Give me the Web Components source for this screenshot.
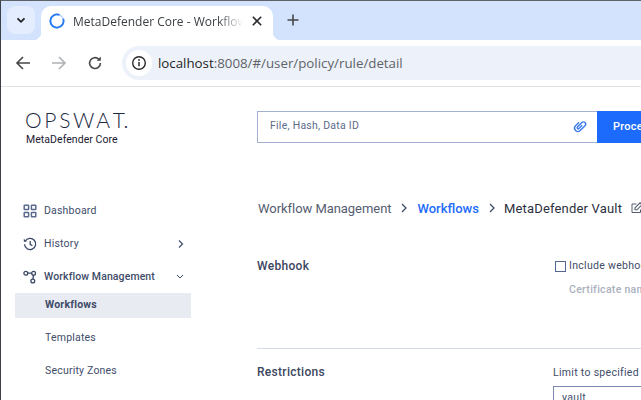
<!DOCTYPE html>
<html>
<head>
<meta charset="utf-8">
<title>MetaDefender Core - Workflow Management</title>
<style>
  html, body { margin: 0; padding: 0; height: 100%; overflow: hidden; background: #ffffff; }
  body { font-family: "Roboto", "Liberation Sans", sans-serif; }
</style>
</head>
<body>
<browser-frame>
  <browser-tabs title-text="MetaDefender Core - Workflow Management"></browser-tabs>
  <browser-toolbar url-host="localhost" url-rest=":8008/#/user/policy/rule/detail"></browser-toolbar>
  <app-shell>
    <side-nav slot="nav"></side-nav>
    <search-bar></search-bar>
    <bread-crumbs></bread-crumbs>
    <settings-section heading="Webhook" pad="51">
      <check-field label="Include webhook data in response"></check-field>
      <div slot="sub">Certificate name</div>
    </settings-section>
    <settings-section heading="Restrictions" pad="0" ruled>
      <limit-field label="Limit to specified user agents" value="vault"></limit-field>
    </settings-section>
  </app-shell>
</browser-frame>

<script>
(function () {
  const define = (name, css, html, setup) => {
    const tpl = document.createElement("template");
    tpl.innerHTML = `<style>${css}</style>${html}`;
    customElements.define(name, class extends HTMLElement {
      constructor() {
        super();
        this.attachShadow({ mode: "open" }).appendChild(tpl.content.cloneNode(true));
      }
      connectedCallback() {
        setup && setup(this, this.shadowRoot);
      }
    });
  };

  define("browser-frame", `
    :host { display: flex; flex-direction: column; width: 641px; height: 400px; overflow: hidden;
      border-top: 1px solid #5f6368; border-left: 1px solid #3c4046; box-sizing: border-box; }
  `, `<slot></slot>`);

  define("browser-tabs", `
    :host { display: flex; align-items: flex-end; height: 39px; flex: none; background: #d3e3fd;
      font-family: "Open Sans", "Noto Sans", sans-serif; }
    .drop { width: 28px; height: 28px; margin: 0 6px 6px 6px; border-radius: 8px; background: #e4edfd;
      display: flex; align-items: center; justify-content: center; flex: none; }
    .tab { position: relative; display: flex; align-items: center; width: 232px; height: 34px; flex: none;
      background: #fff; border-radius: 10px 10px 0 0; box-sizing: border-box; padding: 0 8px 4px 8px; }
    .tab::before, .tab::after { content: ""; position: absolute; bottom: 0; width: 8px; height: 8px;
      background: radial-gradient(circle at 0 0, transparent 8px, #fff 8.5px); }
    .tab::before { left: -8px; }
    .tab::after { right: -8px; background: radial-gradient(circle at 100% 0, transparent 8px, #fff 8.5px); }
    .spin { width: 16px; height: 16px; flex: none; }
    .title { flex: 1; margin-left: 8px; font-size: 12px; color: #3c4043; white-space: nowrap; overflow: hidden;
      -webkit-mask-image: linear-gradient(to right, #000 85%, transparent); }
    .close { width: 16px; height: 16px; flex: none; margin-left: 6px; }
    .plus { width: 16px; height: 16px; margin: 0 0 12px 12px; flex: none; }
  `, `
    <div class="drop"><svg width="12" height="12" viewBox="0 0 12 12"><path d="M2.500 4.300 6 7.800l3.500-3.500" fill="none" stroke="#1f1f1f" stroke-width="1.700"/></svg></div>
    <div class="tab">
      <svg class="spin" viewBox="0 0 16 16"><circle cx="8" cy="8" r="6.600" fill="none" stroke="#c4d9fb" stroke-width="1.700"/><path d="M10.500 1.900A6.600 6.600 0 1 0 14.200 5.800" fill="none" stroke="#2479f2" stroke-width="1.800"/></svg>
      <span class="title"></span>
      <svg class="close" viewBox="0 0 16 16"><path d="M3.800 3.800l8.400 8.400M12.200 3.800l-8.400 8.400" stroke="#2b2d30" stroke-width="1.600"/></svg>
    </div>
    <svg class="plus" viewBox="0 0 16 16"><path d="M8 2.500v11M2.500 8h11" stroke="#444746" stroke-width="1.600"/></svg>
  `, (el, root) => {
    root.querySelector(".title").textContent = el.getAttribute("title-text");
  });

  define("browser-toolbar", `
    :host { display: flex; align-items: center; height: 47px; flex: none; box-sizing: border-box;
      border-bottom: 1px solid #e3e3e3; background: #fff; padding-left: 14px;
      font-family: "Open Sans", "Noto Sans", sans-serif; }
    svg { flex: none; }
    .fwd { margin-left: 20px; }
    .reload { margin-left: 20px; }
    .omni { display: flex; align-items: center; flex: 1; height: 34px; margin-left: 19px; background: #edf2fa;
      border-radius: 17px 0 0 17px; padding-left: 4px; font-size: 13.3px; color: #5f6368; white-space: nowrap; }
    .info { width: 26px; height: 26px; border-radius: 50%; background: #fff; display: flex; align-items: center;
      justify-content: center; margin-right: 6px; flex: none; }
    .host { color: #1f1f1f; }
  `, `
    <svg width="16" height="16" viewBox="0 0 16 16"><path d="M15 8H2M8 2 2 8l6 6" fill="none" stroke="#474747" stroke-width="1.600"/></svg>
    <svg class="fwd" width="16" height="16" viewBox="0 0 16 16"><path d="M1 8h13M8 2l6 6-6 6" fill="none" stroke="#b0b1b3" stroke-width="1.600"/></svg>
    <svg class="reload" width="16" height="16" viewBox="0 0 16 16"><path d="M13.400 8a5.400 5.400 0 1 1-1.600-3.800" fill="none" stroke="#474747" stroke-width="1.600"/><path d="M13.800 1.600v4.200H9.600" fill="#474747"/></svg>
    <div class="omni">
      <span class="info"><svg width="16" height="16" viewBox="0 0 16 16"><circle cx="8" cy="8" r="6.300" fill="none" stroke="#2a2a2a" stroke-width="1.400"/><path d="M8 7v4.200" stroke="#2a2a2a" stroke-width="1.500"/><circle cx="8" cy="5" r=".9" fill="#2a2a2a"/></svg></span>
      <span class="host"></span><span class="rest"></span>
    </div>
  `, (el, root) => {
    root.querySelector(".host").textContent = el.getAttribute("url-host");
    root.querySelector(".rest").textContent = el.getAttribute("url-rest");
  });

  define("app-shell", `
    :host { display: flex; flex: 1; min-height: 0; }
    .nav { width: 256px; flex: none; }
    main { width: 760px; flex: none; }
  `, `<div class="nav"><slot name="nav"></slot></div><main><slot></slot></main>`);

  const navIcons = {
    dash: `<rect x="1.200" y="1.200" width="4.400" height="4.400" rx=".5"/><rect x="8.400" y="1.200" width="4.400" height="4.400" rx=".5"/><rect x="1.200" y="8.400" width="4.400" height="4.400" rx=".5"/><rect x="8.400" y="8.400" width="4.400" height="4.400" rx=".5"/>`,
    hist: `<path d="M2.200 4.200A5.600 5.600 0 1 1 1.500 7.300"/><path d="M.8 1.800v3h3z" fill="#3b4866" stroke="none"/><path d="M7.200 4v3.300l2.200 1.500"/>`,
    flow: `<circle cx="2.800" cy="3.200" r="1.900"/><circle cx="10.600" cy="3.200" r="1.900"/><circle cx="9.800" cy="11" r="1.900"/><path d="M4.700 3.200h4M10.400 5.100l-.4 4"/>`
  };

  define("side-nav", `
    :host { display: block; padding: 23px 0 0 14px; width: 176px; color: #414c69; font-size: 10.5px; letter-spacing: .2px; }
    .logo { padding-left: 10px; height: 84px; }
    .mark { font-family: "Lato", "Liberation Sans", sans-serif; font-size: 21px; font-weight: 300; letter-spacing: 2.7px;
      color: #1d2a44; line-height: 20px; height: 20px; white-space: nowrap; }
    .mark span { letter-spacing: 0; }
    .product { font-size: 10.5px; line-height: 13px; margin-top: 3px; color: #1c2033; padding-left: 1px; letter-spacing: .05px; }
    .item { display: flex; align-items: center; height: 33px; padding-left: 8px; gap: 7px; }
    .item svg.ic { flex: none; fill: none; stroke: #3b4866; stroke-width: 1.300; }
    .item svg.soft { stroke: #5b6b8c; stroke-width: 1.500; }
    .item span { flex: 1; }
    .item svg.caret { margin-right: 6px; flex: none; }
    .strong { font-weight: 500; letter-spacing: .1px; }
    .sub { display: block; height: 33px; line-height: 33px; padding-left: 30px; }
    .sub.on { background: #e8ebf2; height: 25px; line-height: 23px; font-weight: 700; margin-bottom: 3px; }
  `, `
    <div class="logo"><div class="mark">OPSWA<span>T.</span></div><div class="product">MetaDefender Core</div></div>
    <div class="item"><svg class="ic soft" width="14" height="14" viewBox="0 0 14 14">${navIcons.dash}</svg><span>Dashboard</span></div>
    <div class="item"><svg class="ic" width="14" height="14" viewBox="0 0 14 14">${navIcons.hist}</svg><span>History</span><svg class="caret" width="8" height="10" viewBox="0 0 8 10"><path d="M2 1.500l3.500 3.500-3.500 3.500" fill="none" stroke="#414c69" stroke-width="1.200"/></svg></div>
    <div class="item strong"><svg class="ic" width="14" height="14" viewBox="0 0 14 14">${navIcons.flow}</svg><span>Workflow Management</span><svg class="caret" width="10" height="8" viewBox="0 0 10 8"><path d="M2 2l3 3 3-3" fill="none" stroke="#414c69" stroke-width="1"/></svg></div>
    <a class="sub on">Workflows</a>
    <a class="sub">Templates</a>
    <a class="sub">Security Zones</a>
  `);

  define("search-bar", `
    :host { display: flex; width: 460px; height: 32px; margin-top: 24px; font-size: 10.5px; letter-spacing: .25px; }
    .input { flex: 1; display: flex; align-items: center; justify-content: space-between; box-sizing: border-box;
      border: 1px solid #a3b1d1; border-right: 0; padding: 0 9px 3px 12px; color: #5d6a8a; }
    .go { width: 120px; background: #1d6bfc; color: #fff; font-weight: 500; font-size: 11px; padding-left: 16px; line-height: 32px; box-sizing: border-box; }
  `, `
    <div class="input"><span>File, Hash, Data ID</span>
      <svg width="16" height="16" viewBox="0 0 16 16"><path transform="rotate(45 8 8)" d="M4.700 6v5a3.300 3.300 0 0 0 6.600 0V4.200a2.200 2.200 0 0 0-4.400 0V10.500a1.100 1.100 0 0 0 2.200 0V6" fill="none" stroke="#3d7bea" stroke-width="1.400"/></svg>
    </div>
    <div class="go">Process</div>
  `);

  define("bread-crumbs", `
    :host { display: flex; align-items: center; height: 20px; margin-top: 55px; font-size: 13px; color: #555d70; white-space: nowrap; }
    svg { margin: 0 9px 0 9px; flex: none; }
    .first { margin-left: 1px; letter-spacing: -.05px; }
    .now { color: #2b3040; letter-spacing: .18px; margin-left: -1px; }
    .link { color: #1d6bfc; font-weight: 500; }
    .edit { margin: 0 0 0 9px; }
  `, `
    <span class="first">Workflow Management</span>
    <svg width="8" height="10" viewBox="0 0 8 10"><path d="M2 1l4 4-4 4" fill="none" stroke="#414c69" stroke-width="1.300"/></svg>
    <span class="link">Workflows</span>
    <svg width="8" height="10" viewBox="0 0 8 10"><path d="M2 1l4 4-4 4" fill="none" stroke="#414c69" stroke-width="1.300"/></svg>
    <span class="now">MetaDefender Vault</span>
    <svg class="edit" width="12" height="12" viewBox="0 0 12 12"><path d="M9.500 7.500v3h-8.500v-8.500h4.500" fill="none" stroke="#555d70" stroke-width="1"/><path d="M4 5.800l5-5 2 2-5 5H4z" fill="none" stroke="#555d70" stroke-width="1.100"/></svg>
  `);

  define("settings-section", `
    :host { display: grid; grid-template-columns: 298px 1fr; width: 760px; padding-top: 14px; margin-top: 26px;
      font-size: 10.5px; letter-spacing: .3px; color: #414c69; }
    :host([ruled]) { border-top: 1px solid #d5dbeb; margin-top: 0; padding-top: 15px; }
    h3 { margin: 0; font-size: 12px; line-height: 16px; font-weight: 500; color: #3b4660; }
    .body { display: flex; flex-direction: column; padding-top: 1px; }
    ::slotted([slot="sub"]) { color: #aab0bd; font-weight: 500; margin: 10px 0 0 14px; line-height: 14px; }
  `, `
    <h3></h3>
    <div class="body"><slot></slot><slot name="sub"></slot></div>
  `, (el, root) => {
    root.querySelector("h3").textContent = el.getAttribute("heading");
    el.style.paddingBottom = el.getAttribute("pad") + "px";
  });

  define("check-field", `
    :host { display: flex; align-items: center; gap: 3px; white-space: nowrap; line-height: 14px; }
    .box { width: 9px; height: 9px; border: 1px solid #52668f; flex: none; }
  `, `<span class="box"></span><span class="lbl"></span>`, (el, root) => {
    root.querySelector(".lbl").textContent = el.getAttribute("label");
  });

  define("limit-field", `
    :host { display: block; white-space: nowrap; margin-left: -2px; padding-top: 1px; }
    .lbl { line-height: 14px; }
    .input { margin-top: 6px; box-sizing: border-box; width: 300px; height: 30px; border: 1px solid #7d88b0; padding: 4px 8px; line-height: 14px; color: #414c69; }
  `, `<div class="lbl"></div><div class="input"></div>`, (el, root) => {
    root.querySelector(".lbl").textContent = el.getAttribute("label");
    root.querySelector(".input").textContent = el.getAttribute("value");
  });
})();
</script>
</body>
</html>
